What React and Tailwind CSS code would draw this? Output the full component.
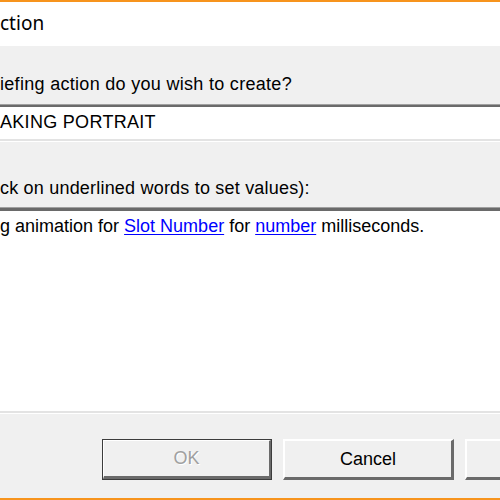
import React from 'react';

const sans = { fontFamily: '"Liberation Sans", Arial, sans-serif' };

const Button = ({ children, disabled, isDefault }) => {
  if (isDefault) {
    return (
      <div className="h-[41px] w-[170px] shrink-0 border border-[#3c3c3c] bg-[#f0f0f0]">
        <div className="flex h-full w-full items-center justify-center border-t border-l border-white border-b-[3px] border-r-[2px] border-b-[#6a6a6a] border-r-[#6a6a6a]">
          <span className={disabled ? 'text-[#a0a0a0] [text-shadow:1px_1px_0_#fff]' : 'text-black'}>{children}</span>
        </div>
      </div>
    );
  }
  return (
    <div className="flex h-[41px] w-[171px] shrink-0 items-center justify-center border-t-2 border-l-2 border-white border-b-[3px] border-r-[3px] border-b-[#6a6a6a] border-r-[#6a6a6a] bg-[#f0f0f0]">
      <span className="text-black">{children}</span>
    </div>
  );
};

export default function App() {
  return (
    <div className="flex h-[500px] w-[500px] flex-col overflow-hidden bg-[#f0f0f0] text-[18px] text-black" style={sans}>
      {/* window frame top */}
      <div className="h-[2px] shrink-0 bg-[#f7941d]" />

      {/* title bar */}
      <div className="flex h-[44px] shrink-0 items-center bg-white">
        <span className="-mt-[2px] text-[19px] text-black" style={{ fontFamily: '"Noto Sans", "Open Sans", sans-serif' }}>
          ction
        </span>
      </div>

      {/* body */}
      <div className="flex flex-1 flex-col">
        <div className="mt-[28px] h-[20px] leading-[20px] tracking-[0.3px] whitespace-nowrap">iefing action do you wish to create?</div>

        <div className="mt-[10px] h-[38px] border-t border-[#a0a0a0] border-b border-b-white">
          <div className="flex h-full items-center border-t-2 border-[#6a6a6a] border-b-2 border-b-[#e3e3e3] bg-white pb-[1px] tracking-[0.3px] whitespace-nowrap">
            AKING PORTRAIT
          </div>
        </div>

        <div className="mt-[36px] h-[20px] leading-[20px] tracking-[0.2px] whitespace-nowrap">ck on underlined words to set values):</div>

        <div className="mt-[9px] h-[207px] border-t border-[#a0a0a0] border-b border-b-white">
          <div className="h-full border-t-[3px] border-[#6a6a6a] border-b-2 border-b-[#e3e3e3] bg-white pt-[5px] leading-[20px] whitespace-nowrap">
            g animation for{' '}
            <span className="text-[#0000ff] underline underline-offset-2">Slot Number</span> for{' '}
            <span className="text-[#0000ff] underline underline-offset-2">number</span> milliseconds.
          </div>
        </div>

        <div className="mt-[25px] flex gap-[11px] pl-[102px]">
          <Button isDefault disabled>OK</Button>
          <Button>Cancel</Button>
          <Button />
        </div>
      </div>

      {/* window frame bottom */}
      <div className="h-[2px] shrink-0 bg-[#f7941d]" />
    </div>
  );
}
